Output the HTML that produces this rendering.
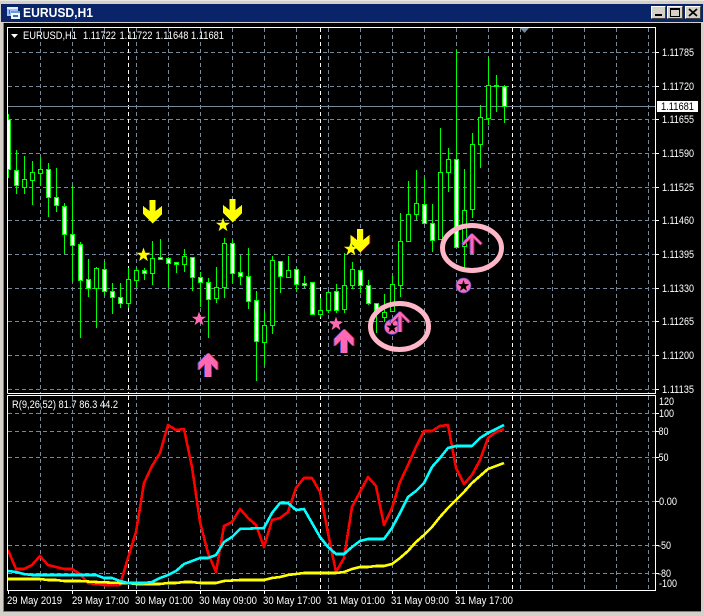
<!DOCTYPE html>
<html><head><meta charset="utf-8"><title>EURUSD,H1</title>
<style>
html,body{margin:0;padding:0;background:#d4d0c8;width:704px;height:616px;overflow:hidden}
svg{display:block;position:absolute;left:0;top:0}
text{font-family:"Liberation Sans",sans-serif;font-size:11px;fill:#fff}
</style></head><body>
<svg width="704" height="616" viewBox="0 0 704 616" xmlns="http://www.w3.org/2000/svg">
<defs>
<polygon id="star" points="0,-7.500 1.800,-2.300 7.100,-2.300 2.900,0.900 4.400,6.100 0,3 -4.400,6.100 -2.900,0.900 -7.100,-2.300 -1.800,-2.300"/>
<polygon id="star2" points="0,-6 1.400,-1.900 5.700,-1.900 2.300,0.700 3.500,4.900 0,2.400 -3.500,4.900 -2.300,0.700 -5.700,-1.900 -1.400,-1.900"/>
<polygon id="dn" points="-3,0 3,0 3,11 9.500,6 9.500,14 0,23.500 -9.500,14 -9.500,6 -3,11"/>
<polygon id="up" points="0,0 9.500,9.500 9.500,17 3,11 3,24 -3,24 -3,11 -9.500,17 -9.500,9.500"/>
<polygon id="upt" points="0,0 9.500,10 9,12.500 1.500,5 1.500,21 -1.500,21 -1.500,5 -9,12.500 -9.500,10"/>
</defs>
<!-- window -->
<rect width="704" height="616" fill="#d4d0c8"/>
<rect x="0" y="0" width="704" height="1" fill="#e8e6e0"/>
<rect x="1" y="4" width="702" height="18" fill="#0a246a"/>
<rect x="0" y="22" width="704" height="1" fill="#d4d0c8"/>
<rect x="4" y="23" width="697" height="588" fill="#000"/>
<rect x="3" y="23" width="1" height="589" fill="#808080"/>
<rect x="3" y="611" width="698" height="1" fill="#808080"/>
<!-- title icon -->
<g shape-rendering="crispEdges">
<rect x="7" y="7" width="11" height="9" fill="#9cc0f0"/>
<rect x="7" y="7" width="11" height="2" fill="#e8f0ff"/>
<rect x="11" y="11" width="9" height="8" fill="#f4f8ff"/>
<rect x="11" y="11" width="9" height="2" fill="#6a9ae0"/>
<rect x="13" y="15" width="5" height="2" fill="#3a6ac0"/>
<rect x="9" y="10" width="1" height="4" fill="#3a6ac0"/>
</g>
<text x="23" y="17" style="font-size:13px;font-weight:bold" textLength="70" lengthAdjust="spacingAndGlyphs">EURUSD,H1</text>
<!-- title buttons -->
<g shape-rendering="crispEdges">
<rect x="651" y="6" width="15" height="13" fill="#d4d0c8"/><path d="M651.500 18.500V6.500H665.500" fill="none" stroke="#fff"/><path d="M651.500 18.500H665.500V6.500" fill="none" stroke="#404040"/>
<rect x="655" y="14" width="7" height="2" fill="#000"/>
<rect x="667" y="6" width="16" height="13" fill="#d4d0c8"/><path d="M667.500 18.500V6.500H682.500" fill="none" stroke="#fff"/><path d="M667.500 18.500H682.500V6.500" fill="none" stroke="#404040"/>
<rect x="670.500" y="8.500" width="9" height="8" fill="none" stroke="#000"/><rect x="670" y="8" width="10" height="2" fill="#000"/>
<rect x="685" y="6" width="16" height="13" fill="#d4d0c8"/><path d="M685.500 18.500V6.500H700.500" fill="none" stroke="#fff"/><path d="M685.500 18.500H700.500V6.500" fill="none" stroke="#404040"/>
</g>
<path d="M689 9L697 16M697 9L689 16" stroke="#000" stroke-width="1.800" fill="none"/>

<!-- grid -->
<g shape-rendering="crispEdges" fill="none" stroke="#778899" stroke-dasharray="4 3">
<path d="M8 52.500H655M8 86.500H655M8 119.500H655M8 153.500H655M8 187.500H655M8 220.500H655M8 254.500H655M8 288.500H655M8 321.500H655M8 355.500H655M8 389.500H655"/>
<path d="M40.500 28V393M72.500 28V393M104.500 28V393M136.500 28V393M168.500 28V393M200.500 28V393M232.500 28V393M264.500 28V393M296.500 28V393M328.500 28V393M360.500 28V393M392.500 28V393M424.500 28V393M456.500 28V393M488.500 28V393M520.500 28V393M552.500 28V393M584.500 28V393M616.500 28V393M648.500 28V393"/>
<path d="M8 413.500H655M8 431.500H655M8 457.500H655M8 501.500H655M8 545.500H655M8 573.500H655"/>
<path d="M40.500 396V590M72.500 396V590M104.500 396V590M136.500 396V590M168.500 396V590M200.500 396V590M232.500 396V590M264.500 396V590M296.500 396V590M328.500 396V590M360.500 396V590M392.500 396V590M424.500 396V590M456.500 396V590M488.500 396V590M520.500 396V590M552.500 396V590M584.500 396V590M616.500 396V590M648.500 396V590"/>
<path stroke="#fff" d="M128.500 28V393M320.500 28V393M512.500 28V393M128.500 396V590M320.500 396V590M512.500 396V590"/>
</g>
<rect x="8" y="106" width="648" height="1" fill="#778899"/>
<polygon points="520,28 529,28 524.500,33" fill="#778899"/>

<!-- candles -->
<g shape-rendering="crispEdges">
<path fill="none" stroke="#0f0" d="M8.500 114V178M16.500 150V194M24.500 156V194M32.500 161V205M40.500 158V186M48.500 163V217M56.500 168V212M64.500 203V254M72.500 185V282M80.500 242V338M88.500 259V297M96.500 267V328M104.500 261V296M112.500 283V314M120.500 283V308M128.500 268V308M136.500 267V288M144.500 268V280M152.500 241V285M160.500 239V259M168.500 257V287M176.500 262V273M184.500 249V272M192.500 257V291M200.500 272V307M208.500 278V338M216.500 267V303M224.500 238V298M232.500 240V283M240.500 255V285M248.500 248V309M256.500 291V381M264.500 311V365M272.500 256V334M280.500 261V293M288.500 256V278M296.500 267V292M304.500 276V288M312.500 282V314M320.500 298V317M328.500 291V313M336.500 284V313M344.500 253V313M352.500 262V289M360.500 270V293M368.500 280V305M376.500 303V333M384.500 294V322M392.500 276V311M400.500 213V297M408.500 181V241M416.500 170V220M424.500 178V223M432.500 204V252M440.500 128V239M448.500 148V192M456.500 50V247M464.500 169V268M472.500 133V218M480.500 105V168M488.500 57V125M496.500 75V112M504.500 85V123"/>
<path fill="#fff" stroke="#0f0" d="M7.500 119.500h3v50h-3zM14.500 170.500h4v15h-4zM46.500 169.500h4v28h-4zM54.500 197.500h4v8h-4zM62.500 206.500h4v28h-4zM70.500 234.500h4v11h-4zM78.500 244.500h4v36h-4zM86.500 279.500h4v9h-4zM102.500 269.500h4v22h-4zM110.500 291.500h4v6h-4zM118.500 297.500h4v6h-4zM142.500 270.500h4v3h-4zM158.500 257.500h4v2h-4zM166.500 258.500h4v5h-4zM174.500 262.500h4v2h-4zM190.500 257.500h4v20h-4zM198.500 277.500h4v5h-4zM206.500 282.500h4v17h-4zM230.500 243.500h4v30h-4zM238.500 272.500h4v4h-4zM246.500 276.500h4v25h-4zM254.500 300.500h4v41h-4zM278.500 261.500h4v15h-4zM294.500 269.500h4v15h-4zM302.500 283.500h4v2h-4zM310.500 282.500h4v32h-4zM334.500 291.500h4v19h-4zM358.500 270.500h4v15h-4zM366.500 285.500h4v18h-4zM374.500 303.500h4v10h-4zM422.500 204.500h4v19h-4zM430.500 223.500h4v17h-4zM454.500 159.500h4v88h-4zM502.500 86.500h4v20h-4z"/>
<path fill="#000" stroke="#0f0" d="M22.500 179.500h4v8h-4zM30.500 172.500h4v8h-4zM38.500 169.500h4v4h-4zM94.500 268.500h4v20h-4zM126.500 279.500h4v24h-4zM134.500 270.500h4v10h-4zM150.500 258.500h4v15h-4zM182.500 256.500h4v8h-4zM214.500 287.500h4v11h-4zM222.500 243.500h4v44h-4zM262.500 325.500h4v17h-4zM270.500 260.500h4v65h-4zM286.500 270.500h4v7h-4zM318.500 310.500h4v4h-4zM326.500 292.500h4v18h-4zM342.500 285.500h4v24h-4zM350.500 269.500h4v16h-4zM382.500 312.500h4v5h-4zM390.500 284.500h4v27h-4zM398.500 241.500h4v44h-4zM406.500 214.500h4v27h-4zM414.500 203.500h4v11h-4zM438.500 172.500h4v67h-4zM446.500 159.500h4v13h-4zM462.500 210.500h4v36h-4zM470.500 144.500h4v65h-4zM478.500 117.500h4v27h-4zM486.500 85.500h4v33h-4zM494.500 85.500h4v1h-4z"/>
</g>

<!-- indicator -->
<g fill="none" stroke-width="2.600" stroke-linejoin="round" shape-rendering="crispEdges">
<polyline stroke="#ff0000" points="8,550 16,569 24,569 32,565 40,556 48,565 56,567 64,569 72,569 80,574 88,583 96,584 104,585 112,585 120,585 128,558 136,532 144,483 152,466 160,453 168,425 176,430 184,429 192,467 200,522 208,553 216,572 224,526 232,522 240,509 248,518 256,525 264,547 272,520 280,518 288,512 296,488 304,478 312,478 320,492 328,533 336,572 344,558 352,507 360,492 368,477 376,486 384,525 392,508 400,482 408,465 416,447 424,431 432,431 440,426 448,425 456,468 464,484 472,475 480,460 488,438 496,432 504,429"/>
<polyline stroke="#ffff00" points="8,579 40,579 48,580 56,580 64,581 80,581 96,582 120,583 128,583 136,584 160,584 168,583 176,583 184,582 192,582 200,583 216,583 224,581 240,580 256,580 264,580 272,578 280,577 288,575 296,574 304,573 336,573 344,572 352,569 360,567 368,567 376,566 384,566 392,564 400,558 408,551 416,542 424,535 432,527 440,517 448,508 456,500 464,492 472,483 480,476 488,469 496,466 504,463"/>
<polyline stroke="#00ffff" points="8,571 16,572 24,574 32,575 96,575 104,578 112,578 120,581 128,583 144,583 152,582 160,578 168,575 176,571 184,564 192,561 200,558 208,558 216,555 224,542 232,537 240,529 264,528 272,513 280,503 288,503 296,510 304,509 312,523 320,537 328,547 336,554 344,554 352,547 360,541 368,539 384,539 392,528 400,513 408,497 416,491 424,483 432,467 440,458 448,448 456,446 472,446 480,438 488,433 496,429 504,425"/>
</g>

<!-- arrows and stars -->
<g shape-rendering="crispEdges">
<use href="#dn" x="152.500" y="200" fill="#ffff00"/>
<use href="#dn" x="232.500" y="199" fill="#ffff00"/>
<use href="#dn" x="361" y="229" fill="#800000"/>
<use href="#dn" x="360" y="229" fill="#ffff00"/>
<use href="#up" x="207" y="353" fill="#4848c8"/><use href="#up" x="209" y="353" fill="#c02040"/><use href="#up" x="208" y="353" fill="#ff69b4"/>
<use href="#up" x="343" y="329" fill="#4848c8"/><use href="#up" x="345" y="329" fill="#c02040"/><use href="#up" x="344" y="329" fill="#ff69b4"/>
</g>
<use href="#star" x="143.500" y="255" fill="#ffff00"/>
<use href="#star" x="223" y="225" fill="#ffff00"/>
<use href="#star" x="351" y="249" fill="#ffff00"/>
<use href="#star" x="199" y="319" fill="#ff69b4"/>
<use href="#star" x="336" y="324" fill="#ff69b4"/>
<ellipse cx="399.500" cy="326.500" rx="29" ry="23" fill="none" stroke="#ffb6c8" stroke-width="5"/>
<ellipse cx="472" cy="248" rx="29.500" ry="22.500" fill="none" stroke="#ffb6c8" stroke-width="5"/>
<circle cx="392" cy="327" r="7.500" fill="#ff69b4" stroke="#4848c8" stroke-width="0.700"/>
<use href="#star2" x="392" y="327.500" fill="#000"/>
<circle cx="463.500" cy="285.500" r="7.500" fill="#ff69b4" stroke="#4848c8" stroke-width="0.700"/>
<use href="#star2" x="463.500" y="286" fill="#000"/>
<g shape-rendering="crispEdges">
<use href="#upt" x="399" y="311" fill="#4848c8"/><use href="#upt" x="401" y="311" fill="#a01848"/><use href="#upt" x="400" y="311" fill="#ff69b4"/>
<use href="#upt" x="471" y="233" fill="#4848c8"/><use href="#upt" x="473" y="233" fill="#a01848"/><use href="#upt" x="472" y="233" fill="#ff69b4"/>
</g>

<!-- frames -->
<g shape-rendering="crispEdges" fill="none" stroke="#fff">
<path d="M7.500 393.500V27.500H655.500V393.500H7.500"/>
<path d="M7.500 395.500H655.500V590.500H7.500Z"/>
<path d="M656 52.500h3M656 86.500h3M656 119.500h3M656 153.500h3M656 187.500h3M656 220.500h3M656 254.500h3M656 288.500h3M656 321.500h3M656 355.500h3M656 389.500h3"/>
<path d="M656 413.500h3M656 431.500h3M656 457.500h3M656 501.500h3M656 545.500h3M656 573.500h3"/>
<path d="M8.500 590V594M72.500 590V594M136.500 590V594M200.500 590V594M264.500 590V594M328.500 590V594M392.500 590V594M456.500 590V594"/>
</g>
<polygon points="11,34 18,34 14.500,38" fill="#fff"/>
<rect x="657" y="101" width="41" height="11" fill="#fff"/>

<!-- text -->
<text x="23" y="39" textLength="54" lengthAdjust="spacingAndGlyphs">EURUSD,H1</text>
<text x="83" y="39" textLength="33" lengthAdjust="spacingAndGlyphs">1.11722</text>
<text x="119.500" y="39" textLength="33" lengthAdjust="spacingAndGlyphs">1.11722</text>
<text x="155.500" y="39" textLength="33" lengthAdjust="spacingAndGlyphs">1.11648</text>
<text x="191" y="39" textLength="33" lengthAdjust="spacingAndGlyphs">1.11681</text>
<text x="12" y="408" textLength="106" lengthAdjust="spacingAndGlyphs">R(9,26,52) 81.7 86.3 44.2</text>

<text x="662" y="56" textLength="32" lengthAdjust="spacingAndGlyphs">1.11785</text>
<text x="662" y="90" textLength="32" lengthAdjust="spacingAndGlyphs">1.11720</text>
<text x="661" y="110" textLength="33" lengthAdjust="spacingAndGlyphs" style="fill:#000">1.11681</text>
<text x="662" y="123" textLength="32" lengthAdjust="spacingAndGlyphs">1.11655</text>
<text x="662" y="157" textLength="32" lengthAdjust="spacingAndGlyphs">1.11590</text>
<text x="662" y="191" textLength="32" lengthAdjust="spacingAndGlyphs">1.11525</text>
<text x="662" y="224" textLength="32" lengthAdjust="spacingAndGlyphs">1.11460</text>
<text x="662" y="258" textLength="32" lengthAdjust="spacingAndGlyphs">1.11395</text>
<text x="662" y="292" textLength="32" lengthAdjust="spacingAndGlyphs">1.11330</text>
<text x="662" y="325" textLength="32" lengthAdjust="spacingAndGlyphs">1.11265</text>
<text x="662" y="359" textLength="32" lengthAdjust="spacingAndGlyphs">1.11200</text>
<text x="662" y="393" textLength="32" lengthAdjust="spacingAndGlyphs">1.11135</text>

<text x="659" y="405" textLength="15" lengthAdjust="spacingAndGlyphs">120</text>
<text x="659" y="417" textLength="15" lengthAdjust="spacingAndGlyphs">100</text>
<text x="658.500" y="435" textLength="10" lengthAdjust="spacingAndGlyphs">80</text>
<text x="658.500" y="461" textLength="10" lengthAdjust="spacingAndGlyphs">50</text>
<text x="659" y="505" textLength="18" lengthAdjust="spacingAndGlyphs">0.00</text>
<text x="658" y="549" textLength="13" lengthAdjust="spacingAndGlyphs">-50</text>
<text x="658" y="577" textLength="13" lengthAdjust="spacingAndGlyphs">-80</text>
<text x="659" y="587" textLength="18" lengthAdjust="spacingAndGlyphs">-100</text>

<text x="7" y="604" textLength="55" lengthAdjust="spacingAndGlyphs">29 May 2019</text>
<text x="72" y="604" textLength="57" lengthAdjust="spacingAndGlyphs">29 May 17:00</text>
<text x="135" y="604" textLength="58" lengthAdjust="spacingAndGlyphs">30 May 01:00</text>
<text x="199" y="604" textLength="58" lengthAdjust="spacingAndGlyphs">30 May 09:00</text>
<text x="263" y="604" textLength="58" lengthAdjust="spacingAndGlyphs">30 May 17:00</text>
<text x="327" y="604" textLength="58" lengthAdjust="spacingAndGlyphs">31 May 01:00</text>
<text x="391" y="604" textLength="58" lengthAdjust="spacingAndGlyphs">31 May 09:00</text>
<text x="455" y="604" textLength="58" lengthAdjust="spacingAndGlyphs">31 May 17:00</text>
</svg>
</body></html>
